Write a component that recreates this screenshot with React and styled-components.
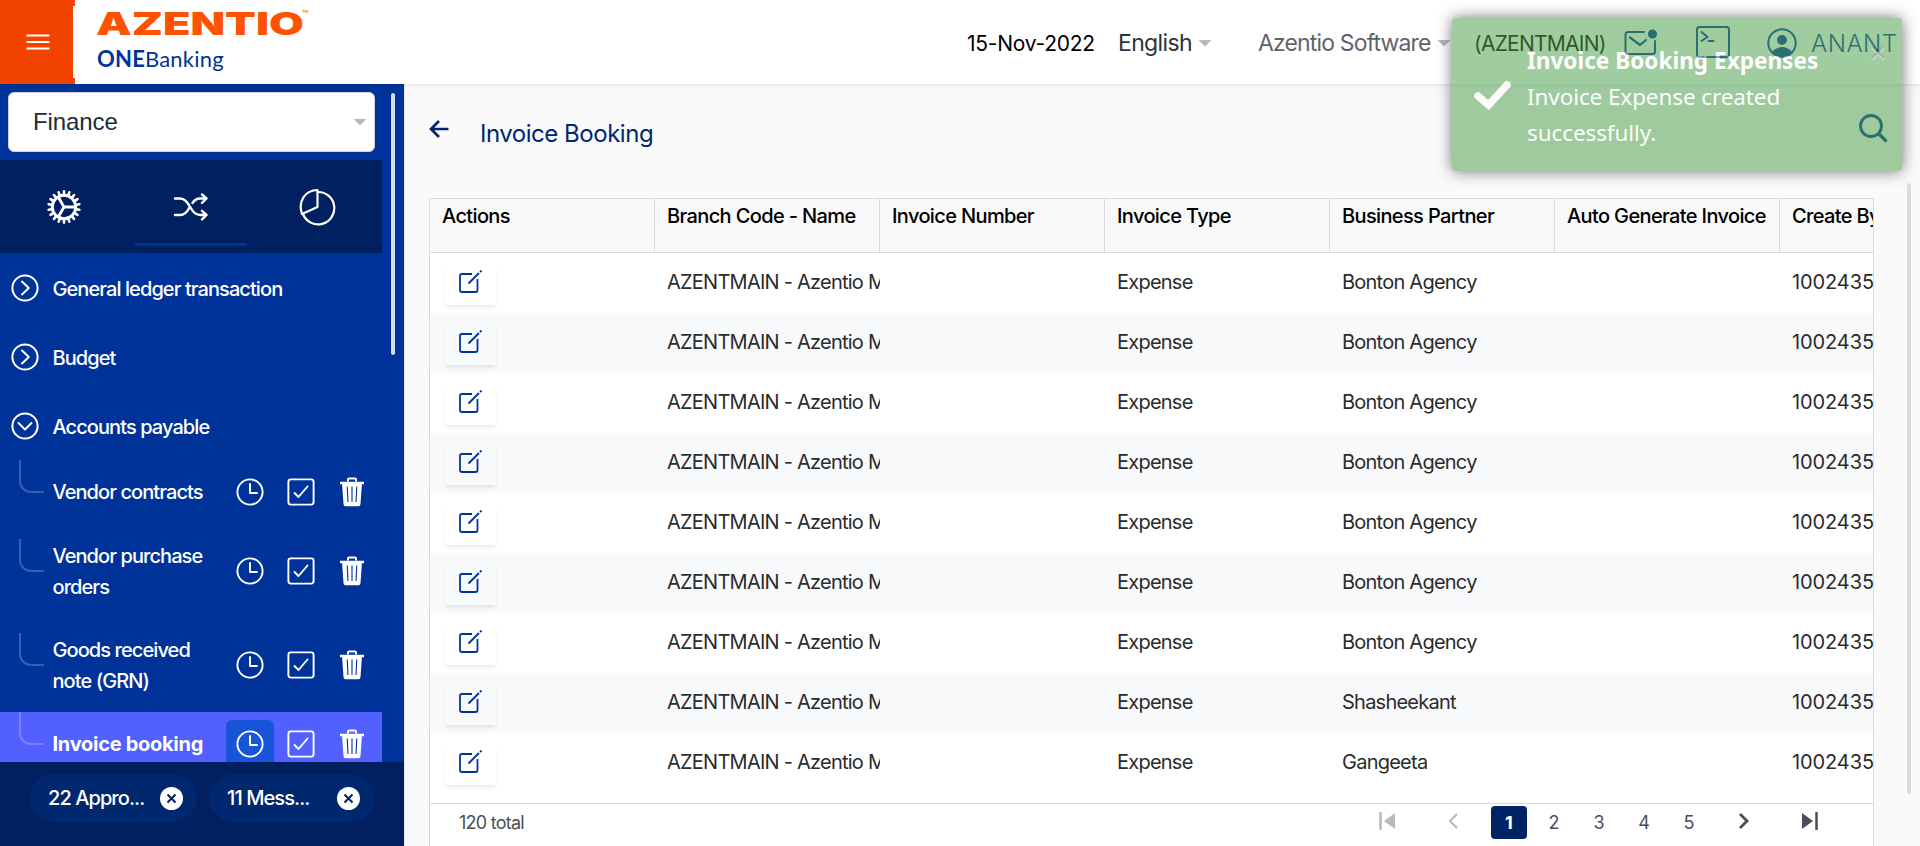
import React from "react";
import styled, { createGlobalStyle, css } from "styled-components";

const Global = createGlobalStyle`
  * { box-sizing: border-box; }
  html, body { margin: 0; padding: 0; overflow: hidden; }
  body { font-family: Inter, "Liberation Sans", sans-serif; background: #fafafa; color: #000; }
  svg { display: block; flex: none; }
`;

const Page = styled.div`
  position: relative;
  width: 1920px;
  height: 846px;
  display: flex;
  flex-direction: column;
  overflow: hidden;
`;

/* ---------- header ---------- */
const Header = styled.header`
  height: 84px;
  flex: none;
  display: flex;
  background: #fff;
  box-shadow: 0 1px 4px rgba(0, 0, 0, 0.1);
  position: relative;
  z-index: 1;
`;
const MenuButton = styled.div`
  width: 75px;
  height: 84px;
  padding: 33px 0 0 26px;
  background: linear-gradient(#fff, #fff) 73px 6px / 2px 72px no-repeat, #f24400;
`;
const Brand = styled.div`
  width: 230px;
  margin-left: 21px;
  display: flex;
  flex-direction: column;
  white-space: nowrap;
`;
const BrandTop = styled.div`
  display: flex;
  height: 36px;
  margin-top: 7px;
  color: #ff5200;
`;
const BrandName = styled.div`
  width: 205px;
  font-weight: 900;
  font-size: 31px;
  line-height: 34px;
  transform: scaleX(1.45);
  transform-origin: 0 0;
`;
const Trade = styled.div`
  margin-left: 1px;
  font-size: 10px;
  line-height: 15px;
`;
const Product = styled.div`
  margin-left: 1px;
  font-family: Lato, sans-serif;
  font-size: 22px;
  line-height: 32px;
  color: #003399;
  letter-spacing: 0.2px;
  b { font-weight: 700; }
`;
const HeaderItems = styled.div`
  display: flex;
  align-items: center;
  height: 86px;
  margin-left: 641px;
  white-space: nowrap;
  > * { flex: none; }
`;
const HeaderText = styled.div`
  width: ${(p) => p.$w}px;
  font-size: ${(p) => p.$size}px;
  letter-spacing: ${(p) => p.$ls || 0}px;
  font-weight: ${(p) => p.$weight || 400};
  color: ${(p) => p.$color || "#000"};
`;
const Caret = styled.div`
  width: 14px;
  height: 7px;
  margin-right: ${(p) => p.$mr || 0}px;
  background: #b8b9bc;
  clip-path: polygon(0 0, 100% 0, 50% 100%);
`;
const IconBox = styled.div`
  width: ${(p) => p.$w}px;
  padding-bottom: ${(p) => p.$pb || 0}px;
`;

/* ---------- sidebar ---------- */
const Body = styled.div`
  flex: 1;
  display: flex;
  min-height: 0;
`;
const Sidebar = styled.aside`
  width: 405px;
  flex: none;
  display: flex;
  flex-direction: column;
  background: #003399;
  border-right: 1px solid #e4e6ea;
`;
const SideScroll = styled.div`
  height: 678px;
  display: flex;
  overflow: hidden;
`;
const SideMain = styled.div`
  width: 382px;
`;
const SideThumb = styled.div`
  width: 4px;
  height: 262px;
  margin: 9px 0 0 9px;
  border-radius: 2px;
  background: #d5dfe3;
`;
const ModuleSelect = styled.div`
  width: 367px;
  height: 60px;
  margin: 8px 0 8px 8px;
  padding: 0 7px 0 24px;
  display: flex;
  align-items: center;
  justify-content: space-between;
  border: 1px solid #ced4da;
  border-radius: 6px;
  background: #fff;
  color: #212b36;
  font: 24px "Liberation Sans", sans-serif;
  letter-spacing: -0.1px;
`;
const Tabs = styled.div`
  height: 93px;
  display: flex;
  background: #002060;
`;
const Tab = styled.div`
  flex: none;
  width: ${(p) => p.$w}px;
  height: 86px;
  margin-right: ${(p) => p.$mr || 0}px;
  display: flex;
  align-items: center;
  justify-content: center;
  padding-top: ${(p) => (p.$active ? 11 : 8)}px;
  border-bottom: ${(p) => (p.$active ? "3px solid #003399" : "0")};
`;
const Group = styled.div`
  height: 69px;
  padding: 0 0 0 10.5px;
  display: flex;
  align-items: center;
  color: #fff;
`;
const ItemText = styled.div`
  font-size: 20px;
  line-height: 31.5px;
  font-weight: ${(p) => (p.$bold ? 700 : 500)};
  letter-spacing: ${(p) => (p.$bold ? -0.28 : -0.92)}px;
  color: #fff;
  width: ${(p) => (p.$w ? p.$w + "px" : "auto")};
  margin: ${(p) => p.$m || 0};
  white-space: ${(p) => (p.$w ? "pre-line" : "nowrap")};
`;
const SubItem = styled.div`
  height: ${(p) => p.$h}px;
  display: flex;
  align-items: flex-start;
  ${(p) => p.$active && css`background: #5260ff;`}
`;
const SubInner = styled.div`
  height: 64px;
  display: flex;
  align-items: center;
`;
const Elbow = styled.div`
  width: 25px;
  height: 33px;
  margin: 0 8.5px 31px 19px;
  border-left: 2px solid rgba(255, 255, 255, 0.22);
  border-bottom: 2px solid rgba(255, 255, 255, 0.22);
  border-bottom-left-radius: 12px;
`;
const Action = styled.div`
  width: ${(p) => p.$w}px;
  height: 48px;
  display: flex;
  align-items: center;
  justify-content: center;
  border-radius: 6px;
  background: ${(p) => (p.$on ? "#1755d8" : "transparent")};
`;
const SideFooter = styled.div`
  flex: 1;
  display: flex;
  gap: 12px;
  padding: 12px 0 0 30px;
  background: #002060;
`;
const Chip = styled.div`
  width: ${(p) => p.$w}px;
  height: 48px;
  padding: 0 14px 0 18px;
  display: flex;
  align-items: center;
  justify-content: space-between;
  border-radius: 24px;
  background: #00286e;
`;

/* ---------- content ---------- */
const Content = styled.main`
  flex: 1;
  display: flex;
  flex-direction: column;
  padding-left: 24px;
  > * { flex: none; }
`;
const TitleRow = styled.div`
  height: 114px;
  display: flex;
  padding-right: 19px;
`;
const BackBox = styled.div`
  width: 51px;
  padding-top: 36px;
`;
const Title = styled.h1`
  flex: 1;
  margin: 34px 0 0;
  font-size: 24px;
  line-height: 31px;
  font-weight: 400;
  letter-spacing: -0.48px;
  color: #002673;
`;
const SearchBox = styled.div`
  padding-top: 30px;
`;
const Table = styled.section`
  width: 1445px;
  height: 660px;
  border: 1px solid #d9dadc;
  background: #fff;
  overflow: hidden;
`;
const HeadRow = styled.div`
  height: 54px;
  display: grid;
  grid-template-columns: repeat(7, 225px);
  background: #f9f9f9;
  border-bottom: 1px solid #d9dadc;
`;
const HeadCell = styled.div`
  padding: 4px 0 0 12px;
  border-right: 1px solid #d9dadc;
  font-size: 20px;
  line-height: 26px;
  font-weight: 500;
  letter-spacing: -0.63px;
  white-space: nowrap;
  overflow: hidden;
`;
const Row = styled.div`
  height: 60px;
  display: grid;
  grid-template-columns: repeat(7, 225px);
  background: ${(p) => (p.$alt ? "#f8f9fb" : "#fff")};
`;
const Cell = styled.div`
  padding: 16px 0 0 12px;
  font-size: 20px;
  line-height: 26px;
  letter-spacing: ${(p) => p.$ls ?? -0.76}px;
  color: #2b2b2b;
  white-space: nowrap;
  overflow: hidden;
`;
const EditCell = styled.div`
  padding: 11px 0 0 15px;
`;
const EditButton = styled.div`
  width: 51px;
  height: 41px;
  padding: 6px 0 0 14px;
  box-shadow: 0 3px 4px -1px rgba(0, 0, 0, 0.1);
`;
const Pager = styled.div`
  height: 60px;
  margin-top: 10px;
  border-top: 1px solid #d9dadc;
  display: flex;
  color: #495057;
`;
const Total = styled.div`
  width: 935px;
  padding: 6px 0 0 29px;
  font-size: 18px;
  line-height: 25px;
  letter-spacing: -0.75px;
`;
const PageIcon = styled.div`
  width: ${(p) => p.$w}px;
  height: 34px;
  padding-left: ${(p) => p.$pl || 0}px;
  display: flex;
  align-items: center;
  justify-content: center;
`;
const PageNo = styled.div`
  width: 36px;
  height: 33px;
  margin: 2px 9px 0 0;
  display: flex;
  align-items: center;
  justify-content: center;
  font-size: 18px;
  border-radius: 4px;
  ${(p) => p.$active && css`background: #002366; color: #fff; font-weight: 700;`}
`;
const PageThumb = styled.div`
  width: 4px;
  height: 611px;
  margin: 99px 9px 0 0;
  border-radius: 2px;
  background: #d5dfe3;
`;

/* ---------- toast ---------- */
const Toast = styled.div`
  position: absolute;
  z-index: 5;
  left: 1452px;
  top: 18px;
  width: 450px;
  height: 153px;
  display: flex;
  border-radius: 4px;
  background: #51a351;
  box-shadow: 0 0 15px #000;
  opacity: 0.54;
  color: #fff;
  font-family: "Noto Sans", sans-serif;
`;
const ToastCheck = styled.div`
  padding: 63px 0 0 22px;
  width: 75px;
`;
const ToastBody = styled.div`
  width: 343px;
  padding-top: 25px;
  font-size: 22.5px;
  line-height: 36px;
  letter-spacing: -0.1px;
  white-space: pre-line;
`;
const ToastTitle = styled.div`
  font-weight: 700;
  letter-spacing: 0.04px;
  white-space: nowrap;
`;
const ToastClose = styled.div`
  padding-top: 26px;
`;

const stroke = (c, w) => ({ fill: "none", stroke: c, strokeWidth: w, strokeLinecap: "round", strokeLinejoin: "round" });

const Burger = () => (
  <svg width="24" height="18"><path d="M0.5 2.5h23M0.5 9h23M0.5 15.5h23" stroke="#fff" strokeWidth="2.2" /></svg>
);
const Gear = () => (
  <svg width="34" height="34" viewBox="-17 -17 34 34" {...stroke("#fff", 2.2)}>
    <circle r="11.7" strokeWidth="3" />
    {Array.from({ length: 18 }, (_, i) => (
      <path key={i} d="M13 0H15.6" strokeWidth="2.6" transform={`rotate(${i * 20 + 10})`} />
    ))}
    <path d="M0 0H11M0 0L-5.6 -9.8M0 0L-5.6 9.8" strokeWidth="2.8" />
  </svg>
);
const Shuffle = () => (
  <svg width="36" height="28" viewBox="0 0 36 28" {...stroke("#fff", 2.4)}>
    <path d="M2 5.500H7C17 5.500 17 22 27 22H33M2 22H7C12 22 14.500 18.500 16.500 14.500M19.500 10C21.500 7 24 5.500 27 5.500H33M29 1.500L33.500 5.500L29 9.800M29 17.800L33.500 22L29 26.300" />
  </svg>
);
const Pie = () => (
  <svg width="38" height="38" viewBox="0 0 38 38" {...stroke("#fff", 2.2)}>
    <path d="M18.500 2V19L3 26C-1.500 13 6.500 2 18.500 2Z" />
    <path d="M18.500 4A16.200 16.200 0 1 1 4 26" />
  </svg>
);
const Chevron = ({ down }) => (
  <svg width="28" height="28" viewBox="-14 -14 28 28" {...stroke("#fff", 2)}>
    <circle r="12.6" />
    <path d={down ? "M-6.500 -3L0 3.500L6.500 -3" : "M-3 -6.500L3.800 0L-3 6.500"} />
  </svg>
);
const Clock = () => (
  <svg width="28" height="28" viewBox="-14 -14 28 28" {...stroke("#fff", 1.9)}>
    <circle r="12.600" /><path d="M0 -8V1H7" />
  </svg>
);
const CheckBox = () => (
  <svg width="28" height="28" viewBox="-14 -14 28 28" {...stroke("#fff", 1.900)}>
    <rect x="-12.600" y="-12.600" width="25.200" height="25.200" rx="2.500" /><path d="M-6.500 1L-2.500 5L6.500 -5.500" />
  </svg>
);
const Trash = () => (
  <svg width="26" height="30" viewBox="0 0 26 30" fill="none" stroke="#fff">
    <path d="M9 4.500V2.600Q9 1.600 10 1.600H16Q17 1.600 17 2.600V4.500" strokeWidth="2" />
    <path d="M1 6H25" strokeWidth="2.500" />
    <path d="M3 6H23L21.500 27Q21.400 29.300 19.500 29.300H6.500Q4.600 29.300 4.500 27Z" fill="#fff" stroke="none" />
    <path d="M8.200 9.500L9 25M13 9.500V25M17.800 9.500L17 25" stroke="#003399" strokeWidth="1.100" />
  </svg>
);
const CloseDot = () => (
  <svg width="23" height="23" viewBox="-11.5 -11.5 23 23">
    <circle r="11.500" fill="#fff" /><path d="M-4 -4L4 4M4 -4L-4 4" stroke="#002060" strokeWidth="2" />
  </svg>
);
const Edit = () => (
  <svg width="25" height="25" viewBox="0 0 25 25" fill="none" stroke="#003399" strokeWidth="1.800">
    <path d="M13 4H3Q1 4 1 6V20Q1 22 3 22H16.500Q18.500 22 18.500 20V9" />
    <path d="M9.500 13.500L20 3" /><path d="M21 2L22.500 0.500" />
  </svg>
);
const Mail = () => (
  <svg width="34" height="28" viewBox="0 0 34 28" {...stroke("#003399", 2)}>
    <path d="M20 3H4Q1.500 3 1.500 5.500V22.500Q1.500 25 4 25H28.500Q31 25 31 22.500V12" />
    <path d="M6 8.500L16 16L22 11" strokeWidth="2.200" /><circle cx="28.500" cy="5" r="4.600" fill="#003399" stroke="none" />
  </svg>
);
const Terminal = () => (
  <svg width="34" height="32" viewBox="0 0 34 32" {...stroke("#003399", 2)}>
    <rect x="1" y="1" width="32" height="30" rx="2.500" /><path d="M5.500 6L11.500 11L5.500 15M12.500 15H17.500" />
  </svg>
);
const User = () => (
  <svg width="30" height="30" viewBox="-15 -15 30 30">
    <circle r="13.700" fill="none" stroke="#003399" strokeWidth="2" />
    <circle cy="-3" r="5" fill="#003399" />
    <path d="M-10.500 9.500Q-6 4 0 4T10.500 9.500A14 14 0 0 1 -10.500 9.500Z" fill="#003399" />
  </svg>
);
const Search = () => (
  <svg width="29" height="29" viewBox="0 0 29 29" fill="none" stroke="#003399" strokeWidth="2.800">
    <circle cx="12" cy="12" r="10.500" /><path d="M19 19L27.500 27.500" strokeWidth="3.200" />
  </svg>
);
const Back = () => (
  <svg width="20" height="18" viewBox="0 0 20 18" fill="none" stroke="#002673" strokeWidth="2.700">
    <path d="M19.500 9H2.500M10 1L2 9L10 17" />
  </svg>
);

const columns = [
  "Actions", "Branch Code - Name", "Invoice Number", "Invoice Type",
  "Business Partner", "Auto Generate Invoice", "Create By",
];
const partners = [...Array(7).fill("Bonton Agency"), "Shasheekant", "Gangeeta"];
const items = [
  { label: "Vendor contracts", h: 79 },
  { label: "Vendor purchase\norders", h: 94 },
  { label: "Goods received\nnote (GRN)", h: 79 },
  { label: "Invoice booking", h: 64, active: true },
];

export default function App() {
  return (
    <Page>
      <Global />
      <Header>
        <MenuButton><Burger /></MenuButton>
        <Brand>
          <BrandTop><BrandName>AZENTIO</BrandName><Trade>™</Trade></BrandTop>
          <Product><b>ONE</b>Banking</Product>
        </Brand>
        <HeaderItems>
          <HeaderText $w={151} $size={21} $ls={-0.25}>15-Nov-2022</HeaderText>
          <HeaderText $w={80} $size={23} $ls={-0.65} $color="#2b333d">English</HeaderText>
          <Caret $mr={46} />
          <HeaderText $w={179} $size={23} $ls={-0.85} $color="#5f646b">Azentio Software</HeaderText>
          <Caret $mr={23} />
          <HeaderText $w={150} $size={21} $ls={-0.75}>(AZENTMAIN)</HeaderText>
          <IconBox $w={72}><Mail /></IconBox>
          <IconBox $w={71} $pb={2}><Terminal /></IconBox>
          <IconBox $w={44} $pb={1}><User /></IconBox>
          <HeaderText $w={90} $size={24} $weight={300} $ls={0.5} $color="#003399">ANANT</HeaderText>
        </HeaderItems>
      </Header>
      <Body>
        <Sidebar>
          <SideScroll>
            <SideMain>
              <ModuleSelect>Finance<Caret /></ModuleSelect>
              <Tabs>
                <Tab $w={128} $mr={7}><Gear /></Tab>
                <Tab $w={112} $active><Shuffle /></Tab>
                <Tab $w={142}><Pie /></Tab>
              </Tabs>
              {["General ledger transaction", "Budget", "Accounts payable"].map((t, i) => (
                <Group key={t}>
                  <Chevron down={i === 2} />
                  <ItemText $m="5px 0 0 14px">{t}</ItemText>
                </Group>
              ))}
              {items.map((it) => (
                <SubItem key={it.label} $h={it.h} $active={it.active}>
                  <SubInner>
                    <Elbow />
                    <ItemText $w={173} $bold={it.active} $m="2px 0 0 0">{it.label}</ItemText>
                    <Action $w={48} $on={it.active}><Clock /></Action>
                    <Action $w={54}><CheckBox /></Action>
                    <Action $w={48}><Trash /></Action>
                  </SubInner>
                </SubItem>
              ))}
            </SideMain>
            <SideThumb />
          </SideScroll>
          <SideFooter>
            <Chip $w={167}><ItemText $m="2px 0 0">22 Appro...</ItemText><CloseDot /></Chip>
            <Chip $w={165}><ItemText $m="2px 0 0">11 Mess...</ItemText><CloseDot /></Chip>
          </SideFooter>
        </Sidebar>
        <Content>
          <TitleRow>
            <BackBox><Back /></BackBox>
            <Title>Invoice Booking</Title>
            <SearchBox><Search /></SearchBox>
          </TitleRow>
          <Table>
            <HeadRow>
              {columns.map((c) => <HeadCell key={c}>{c}</HeadCell>)}
            </HeadRow>
            {partners.map((p, i) => (
              <Row key={i} $alt={i % 2 === 1}>
                <EditCell><EditButton><Edit /></EditButton></EditCell>
                <Cell>AZENTMAIN - Azentio Main</Cell>
                <Cell />
                <Cell>Expense</Cell>
                <Cell>{p}</Cell>
                <Cell />
                <Cell $ls={-0.1}>1002435</Cell>
              </Row>
            ))}
            <Pager>
              <Total>120 total</Total>
              <PageIcon $w={44}><svg width="16" height="18"><path d="M1.500 0V18" stroke="#b9babc" strokeWidth="2.500" /><path d="M16 1V17L5 9Z" fill="#b9babc" /></svg></PageIcon>
              <PageIcon $w={82} $pl={6}><svg width="10" height="16"><path d="M9 1L2 8L9 15" fill="none" stroke="#b9babc" strokeWidth="2.200" /></svg></PageIcon>
              {[1, 2, 3, 4, 5].map((n) => <PageNo key={n} $active={n === 1}>{n}</PageNo>)}
              <PageIcon $w={56}><svg width="10" height="16"><path d="M1 1L8 8L1 15" fill="none" stroke="#495057" strokeWidth="2.800" /></svg></PageIcon>
              <PageIcon $w={76}><svg width="16" height="18"><path d="M14.500 0V18" stroke="#495057" strokeWidth="2.500" /><path d="M0 1V17L11 9Z" fill="#495057" /></svg></PageIcon>
            </Pager>
          </Table>
        </Content>
        <PageThumb />
      </Body>
      <Toast>
        <ToastCheck>
          <svg width="38" height="29" viewBox="0 0 38 29"><path d="M4 15L14.500 24L33 4" fill="none" stroke="#fff" strokeWidth="7.500" strokeLinejoin="miter" strokeLinecap="round" /></svg>
        </ToastCheck>
        <ToastBody>
          <ToastTitle>Invoice Booking Expenses</ToastTitle>
          {"Invoice Expense created\nsuccessfully."}
        </ToastBody>
        <ToastClose>
          <svg width="16" height="16"><path d="M2 3L14 15M14 3L2 15" stroke="#b9d3b9" strokeWidth="3" /><path d="M2 2L14 14M14 2L2 14" stroke="#5c7a5c" strokeWidth="2.5" /></svg>
        </ToastClose>
      </Toast>
    </Page>
  );
}
